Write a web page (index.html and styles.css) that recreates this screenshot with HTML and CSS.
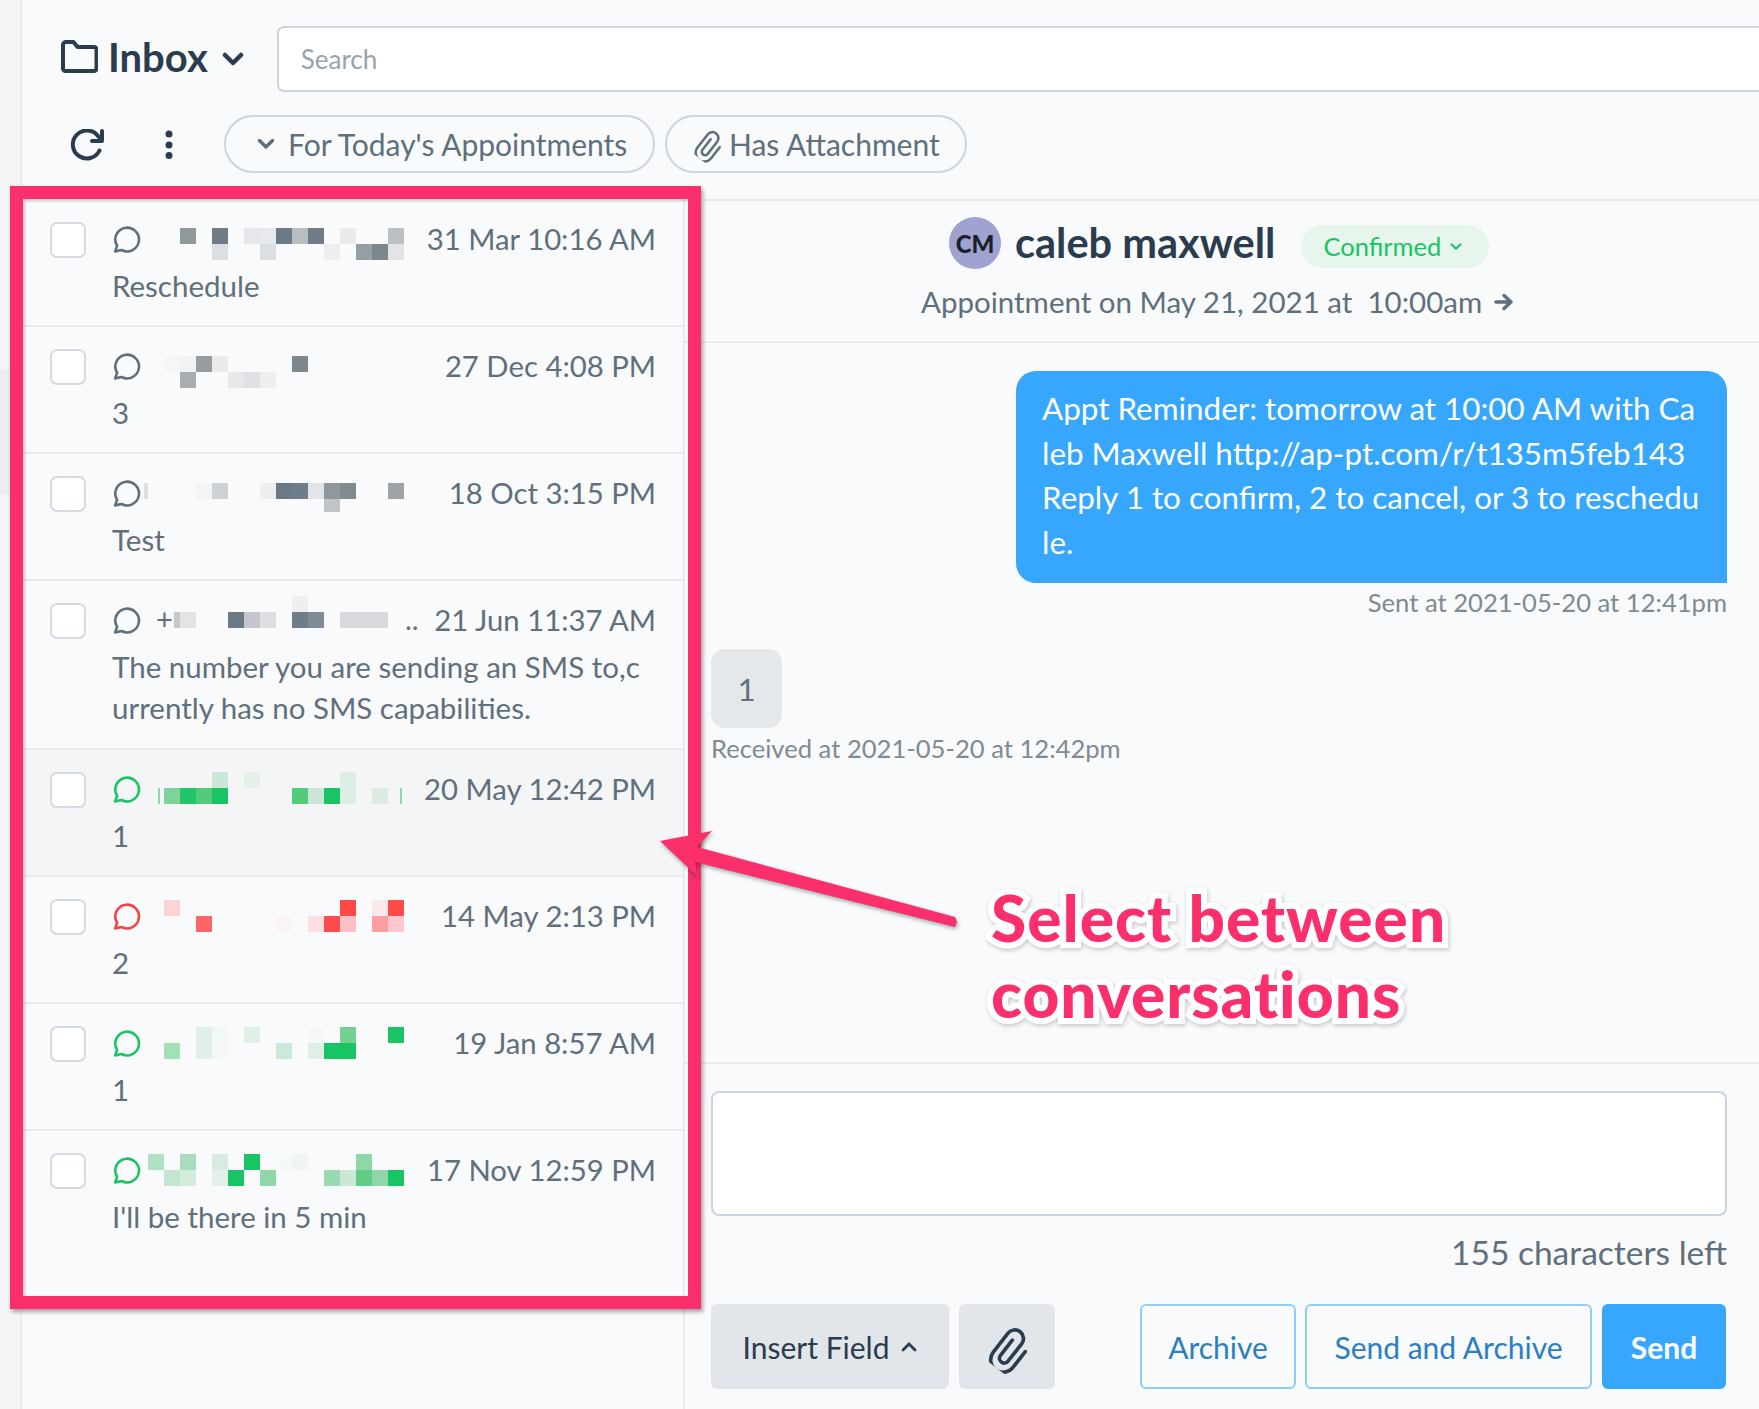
FILE: index.html
```html
<!DOCTYPE html>
<html lang="en">
<head>
  <meta charset="UTF-8" />
  <title>Inbox</title>
  <link rel="stylesheet" href="styles.css">
</head>
<body>
<div class="app">
  <div class="rail"><div class="rail-tab"></div></div>
  <div class="main">

    <div class="topbar">
      <svg class="folder" viewBox="0 0 37 33"><path d="M5 2h7.500l4 5H33a2.500 2.500 0 0 1 2.500 2.500v19A2.500 2.500 0 0 1 33 31H4.500A2.500 2.500 0 0 1 2 28.500V5a3 3 0 0 1 3-3z"/></svg>
      <span class="title">Inbox</span>
      <svg class="title-chevron" viewBox="0 0 22 14"><path d="M3 3l8 8 8-8"/></svg>
      <input class="search" type="text" placeholder="Search">
    </div>

    <div class="toolbar">
      <svg class="refresh" viewBox="0 0 36 32"><path d="M30.500 21.500A14 14 0 1 1 29 7l3.500 4"/><path d="M33 2v10H23"/></svg>
      <svg class="kebab" viewBox="0 0 8 30"><circle cx="4" cy="4" r="3.500"/><circle cx="4" cy="15" r="3.500"/><circle cx="4" cy="25.500" r="3.500"/></svg>
      <div class="pill pill-first">
        <svg class="pill-chevron" viewBox="0 0 18 12"><path d="M2.500 2.500L9 9l6.500-6.500"/></svg>
        For Today's Appointments
      </div>
      <div class="pill pill-second">
        <svg class="clip clip-small" viewBox="0 0 24 24"><path d="M12 7.500v10a2.500 2.500 0 0 0 5 0V6a4.500 4.500 0 0 0-9 0v12.500a6.500 6.500 0 0 0 13 0V8"/></svg>
        Has Attachment
      </div>
    </div>

    <div class="workspace">
      <div class="list">

        <div class="row">
          <div class="check"></div>
          <div class="row-body">
            <div class="row-head">
              <svg class="chat" viewBox="0 0 26 26"><path d="M2 24.500l1.800-5.200A11 11 0 1 1 8 23.200z"/></svg>
              <svg class="mosaic" viewBox="148 223 272 32">
                <rect x="180" y="228" width="16" height="16" fill="#8f999c"/>
                <rect x="212" y="228" width="16" height="16" fill="#6f7c85"/>
                <rect x="244" y="228" width="16" height="16" fill="#e5e7ea"/>
                <rect x="260" y="228" width="16" height="16" fill="#e8e9ec"/>
                <rect x="276" y="228" width="16" height="16" fill="#6c7a87"/>
                <rect x="292" y="228" width="16" height="16" fill="#b9bdc0"/>
                <rect x="308" y="228" width="16" height="16" fill="#6f7c87"/>
                <rect x="340" y="228" width="16" height="16" fill="#e8eaec"/>
                <rect x="388" y="228" width="16" height="16" fill="#bcc0c3"/>
                <rect x="212" y="244" width="16" height="16" fill="#dcdfe2"/>
                <rect x="260" y="244" width="16" height="16" fill="#dcdfe1"/>
                <rect x="324" y="244" width="16" height="16" fill="#eceef0"/>
                <rect x="356" y="244" width="16" height="16" fill="#969fa3"/>
                <rect x="372" y="244" width="16" height="16" fill="#7b8890"/>
                <rect x="388" y="244" width="16" height="16" fill="#e2e4e6"/>
              </svg>
              <span class="date">31 Mar 10:16 AM</span>
            </div>
            <div class="message">Reschedule</div>
          </div>
        </div>

        <div class="row">
          <div class="check"></div>
          <div class="row-body">
            <div class="row-head">
              <svg class="chat" viewBox="0 0 26 26"><path d="M2 24.500l1.800-5.200A11 11 0 1 1 8 23.200z"/></svg>
              <svg class="mosaic" viewBox="148 350 272 32">
                <rect x="164" y="356" width="16" height="16" fill="#f5f6f8"/>
                <rect x="180" y="356" width="16" height="16" fill="#f0f2f4"/>
                <rect x="196" y="356" width="16" height="16" fill="#969ca0"/>
                <rect x="212" y="356" width="16" height="16" fill="#e8eaec"/>
                <rect x="292" y="356" width="16" height="16" fill="#7e888c"/>
                <rect x="180" y="372" width="16" height="16" fill="#a8adb2"/>
                <rect x="228" y="372" width="16" height="16" fill="#e6e8ea"/>
                <rect x="244" y="372" width="16" height="16" fill="#dfe1e4"/>
                <rect x="260" y="372" width="16" height="16" fill="#eceef0"/>
              </svg>
              <span class="date">27 Dec 4:08 PM</span>
            </div>
            <div class="message">3</div>
          </div>
        </div>

        <div class="row">
          <div class="check"></div>
          <div class="row-body">
            <div class="row-head">
              <svg class="chat" viewBox="0 0 26 26"><path d="M2 24.500l1.800-5.200A11 11 0 1 1 8 23.200z"/></svg>
              <svg class="mosaic" viewBox="148 478 272 32">
                <rect x="144" y="484" width="4" height="16" fill="#dddfe1"/>
                <rect x="196" y="484" width="16" height="16" fill="#f3f4f6"/>
                <rect x="212" y="484" width="16" height="16" fill="#cfd2d4"/>
                <rect x="260" y="484" width="16" height="16" fill="#eceef0"/>
                <rect x="276" y="484" width="16" height="16" fill="#6b7985"/>
                <rect x="292" y="484" width="16" height="16" fill="#6f7d8a"/>
                <rect x="308" y="484" width="16" height="16" fill="#e2e4e7"/>
                <rect x="324" y="484" width="16" height="16" fill="#8f989f"/>
                <rect x="340" y="484" width="16" height="16" fill="#7e8b8f"/>
                <rect x="388" y="484" width="16" height="16" fill="#9ea3a6"/>
                <rect x="324" y="500" width="16" height="13" fill="#bfc4c8"/>
              </svg>
              <span class="date">18 Oct 3:15 PM</span>
            </div>
            <div class="message">Test</div>
          </div>
        </div>

        <div class="row">
          <div class="check"></div>
          <div class="row-body">
            <div class="row-head">
              <svg class="chat" viewBox="0 0 26 26"><path d="M2 24.500l1.800-5.200A11 11 0 1 1 8 23.200z"/></svg>
              <svg class="mosaic" viewBox="148 604 272 32">
                <text class="mosaic-text" x="156" y="630">+</text>
                <rect x="174" y="612" width="6" height="16" fill="#c5c9cc"/>
                <rect x="180" y="612" width="16" height="16" fill="#e2e4e6"/>
                <rect x="228" y="612" width="16" height="16" fill="#6b7985"/>
                <rect x="244" y="612" width="16" height="16" fill="#c3c7cb"/>
                <rect x="260" y="612" width="16" height="16" fill="#dcdee1"/>
                <rect x="292" y="612" width="16" height="16" fill="#6f7d8a"/>
                <rect x="308" y="612" width="16" height="16" fill="#7f8c97"/>
                <rect x="340" y="612" width="48" height="16" fill="#d8dadd"/>
                <rect x="292" y="596" width="16" height="16" fill="#eeeff1"/>
                <text class="mosaic-text" x="405" y="630">..</text>
              </svg>
              <span class="date">21 Jun 11:37 AM</span>
            </div>
            <div class="message">The number you are sending an SMS to,c<br>urrently has no SMS capabilities.</div>
          </div>
        </div>

        <div class="row row-active">
          <div class="check"></div>
          <div class="row-body">
            <div class="row-head">
              <svg class="chat chat-green" viewBox="0 0 26 26"><path d="M2 24.500l1.800-5.200A11 11 0 1 1 8 23.200z"/></svg>
              <svg class="mosaic" viewBox="148 773 272 32">
                <rect x="158" y="788" width="2" height="16" fill="#8fd6a9"/>
                <rect x="164" y="788" width="16" height="16" fill="#7fd39a"/>
                <rect x="180" y="788" width="16" height="16" fill="#22c567"/>
                <rect x="196" y="788" width="16" height="16" fill="#52cb7c"/>
                <rect x="212" y="788" width="16" height="16" fill="#18c463"/>
                <rect x="212" y="772" width="16" height="16" fill="#c9e8d5"/>
                <rect x="244" y="772" width="16" height="16" fill="#e3f1e8"/>
                <rect x="292" y="788" width="16" height="16" fill="#52cb7c"/>
                <rect x="308" y="788" width="16" height="16" fill="#cbe6d6"/>
                <rect x="324" y="788" width="16" height="16" fill="#18c463"/>
                <rect x="340" y="788" width="16" height="16" fill="#ddefe4"/>
                <rect x="340" y="772" width="16" height="16" fill="#ddefe4"/>
                <rect x="372" y="788" width="16" height="16" fill="#dcece3"/>
                <rect x="400" y="788" width="2" height="16" fill="#8fd6a9"/>
              </svg>
              <span class="date">20 May 12:42 PM</span>
            </div>
            <div class="message">1</div>
          </div>
        </div>

        <div class="row">
          <div class="check"></div>
          <div class="row-body">
            <div class="row-head">
              <svg class="chat chat-red" viewBox="0 0 26 26"><path d="M2 24.500l1.800-5.200A11 11 0 1 1 8 23.200z"/></svg>
              <svg class="mosaic" viewBox="148 900 272 32">
                <rect x="164" y="900" width="16" height="16" fill="#fdd5d7"/>
                <rect x="340" y="900" width="16" height="16" fill="#ff4848"/>
                <rect x="372" y="900" width="16" height="16" fill="#fbe8ea"/>
                <rect x="388" y="900" width="16" height="16" fill="#ff4a4a"/>
                <rect x="196" y="916" width="16" height="16" fill="#ff6467"/>
                <rect x="276" y="916" width="16" height="16" fill="#fbf3f4"/>
                <rect x="308" y="916" width="16" height="16" fill="#fbdfe1"/>
                <rect x="324" y="916" width="16" height="16" fill="#ff4a4e"/>
                <rect x="340" y="916" width="16" height="16" fill="#fdc0c4"/>
                <rect x="372" y="916" width="16" height="16" fill="#ff9da3"/>
                <rect x="388" y="916" width="16" height="16" fill="#fdc8cd"/>
              </svg>
              <span class="date">14 May 2:13 PM</span>
            </div>
            <div class="message">2</div>
          </div>
        </div>

        <div class="row">
          <div class="check"></div>
          <div class="row-body">
            <div class="row-head">
              <svg class="chat chat-green" viewBox="0 0 26 26"><path d="M2 24.500l1.800-5.200A11 11 0 1 1 8 23.200z"/></svg>
              <svg class="mosaic" viewBox="148 1028 272 32">
                <rect x="196" y="1028" width="16" height="16" fill="#e0efe7"/>
                <rect x="212" y="1028" width="16" height="16" fill="#f3f7f5"/>
                <rect x="244" y="1028" width="16" height="16" fill="#dff0e7"/>
                <rect x="308" y="1028" width="16" height="16" fill="#f5f8f7"/>
                <rect x="340" y="1028" width="16" height="16" fill="#73d193"/>
                <rect x="388" y="1028" width="16" height="16" fill="#18c463"/>
                <rect x="164" y="1044" width="16" height="16" fill="#a3dfb7"/>
                <rect x="196" y="1044" width="16" height="16" fill="#e0efe7"/>
                <rect x="212" y="1044" width="16" height="16" fill="#f3f7f5"/>
                <rect x="276" y="1044" width="16" height="16" fill="#cbe9d7"/>
                <rect x="308" y="1044" width="16" height="16" fill="#e0efe4"/>
                <rect x="324" y="1044" width="16" height="16" fill="#18c463"/>
                <rect x="340" y="1044" width="16" height="16" fill="#18c463"/>
              </svg>
              <span class="date">19 Jan 8:57 AM</span>
            </div>
            <div class="message">1</div>
          </div>
        </div>

        <div class="row row-last">
          <div class="check"></div>
          <div class="row-body">
            <div class="row-head">
              <svg class="chat chat-green" viewBox="0 0 26 26"><path d="M2 24.500l1.800-5.200A11 11 0 1 1 8 23.200z"/></svg>
              <svg class="mosaic" viewBox="148 1156 272 32">
                <rect x="148" y="1156" width="16" height="16" fill="#b0e2c2"/>
                <rect x="180" y="1156" width="16" height="16" fill="#a9dcba"/>
                <rect x="212" y="1156" width="16" height="16" fill="#d6ecdf"/>
                <rect x="244" y="1156" width="16" height="16" fill="#18c463"/>
                <rect x="276" y="1156" width="16" height="16" fill="#f5f9f7"/>
                <rect x="292" y="1156" width="16" height="16" fill="#eff6f2"/>
                <rect x="356" y="1156" width="16" height="16" fill="#8fd6a9"/>
                <rect x="164" y="1172" width="16" height="16" fill="#c2e6cf"/>
                <rect x="180" y="1172" width="16" height="16" fill="#d3ecde"/>
                <rect x="212" y="1172" width="16" height="16" fill="#e3f1e9"/>
                <rect x="228" y="1172" width="16" height="16" fill="#18c463"/>
                <rect x="260" y="1172" width="16" height="16" fill="#8fd6a9"/>
                <rect x="324" y="1172" width="16" height="16" fill="#9bd9b1"/>
                <rect x="340" y="1172" width="16" height="16" fill="#cbe8d5"/>
                <rect x="356" y="1172" width="16" height="16" fill="#62cd87"/>
                <rect x="372" y="1172" width="16" height="16" fill="#8fd6a9"/>
                <rect x="388" y="1172" width="16" height="16" fill="#18c463"/>
              </svg>
              <span class="date">17 Nov 12:59 PM</span>
            </div>
            <div class="message">I'll be there in 5 min</div>
          </div>
        </div>

      </div>

      <div class="thread">
        <div class="contact">
          <div class="contact-name">
            <div class="avatar">CM</div>
            <span class="name">caleb maxwell</span>
            <div class="badge">Confirmed <svg class="badge-chevron" viewBox="0 0 12 8"><path d="M1.500 1.500L6 6l4.500-4.500"/></svg></div>
          </div>
          <div class="appointment">Appointment on May 21, 2021 at&nbsp; 10:00am
            <svg class="arrow-right" viewBox="0 0 20 18"><path d="M2 9h15M10 2.500L17 9l-7 6.500"/></svg>
          </div>
        </div>

        <div class="messages">
          <div class="bubble bubble-out">Appt Reminder: tomorrow at 10:00 AM with Ca<br>leb Maxwell http://ap-pt.com/r/t135m5feb143<br>Reply 1 to confirm, 2 to cancel, or 3 to reschedu<br>le.</div>
          <div class="meta meta-out">Sent at 2021-05-20 at 12:41pm</div>
          <div class="bubble bubble-in">1</div>
          <div class="meta">Received at 2021-05-20 at 12:42pm</div>
        </div>

        <div class="composer">
          <textarea class="reply"></textarea>
          <div class="counter">155 characters left</div>
          <div class="actions">
            <button class="btn btn-grey btn-insert">Insert Field <svg class="insert-chevron" viewBox="0 0 16 10"><path d="M2 8l6-6 6 6"/></svg></button>
            <button class="btn btn-grey btn-attach"><svg class="clip clip-big" viewBox="0 0 24 24"><path d="M12 7.500v10a2.500 2.500 0 0 0 5 0V6a4.500 4.500 0 0 0-9 0v12.500a6.500 6.500 0 0 0 13 0V8"/></svg></button>
            <button class="btn btn-line btn-archive">Archive</button>
            <button class="btn btn-line btn-both">Send and Archive</button>
            <button class="btn btn-send">Send</button>
          </div>
        </div>
      </div>
    </div>
  </div>
</div>

<!-- annotation drawn on top of the app -->
<div class="frame"></div>
<svg class="pointer" viewBox="0 0 320 125"><path d="M10 31L62 21 47 37 305 107 307 112 305 117 45 52 48 67z"/></svg>
<div class="callout">Select between<br>conversations</div>

</body>
</html>
```

FILE: styles.css
```css
html, body {
  margin: 0;
  padding: 0;
  height: 100%;
  overflow: hidden;
}
body {
  background: #f8fafc;
  color: #606f7b;
  font-family: Lato, "Noto Sans", sans-serif;
  position: relative;
}
svg {
  display: block;
  flex: none;
}
.app {
  display: flex;
  height: 1409px;
}
.rail {
  width: 21px;
  flex: none;
  background: #f2f4f6;
  border-right: 1px solid #e4e7ea;
  padding-top: 370px;
}
.rail-tab {
  width: 9px;
  height: 125px;
  background: #ebedf0;
}
.main {
  flex: 1;
  min-width: 0;
  display: flex;
  flex-direction: column;
}

/* top bar */
.topbar {
  height: 91px;
  box-sizing: border-box;
  padding: 26px 0 0 38px;
  display: flex;
  align-items: flex-start;
}
.folder {
  width: 37px;
  height: 33px;
  margin: 14px 10px 0 1px;
  fill: none;
  stroke: #2a3c4e;
  stroke-width: 4;
  stroke-linejoin: round;
}
.title {
  font-size: 40px;
  font-weight: 700;
  line-height: 62px;
  color: #2a3c4e;
}
.title-chevron {
  width: 22px;
  height: 14px;
  margin: 26px 33px 0 14px;
  fill: none;
  stroke: #2a3c4e;
  stroke-width: 4.500;
  stroke-linecap: round;
  stroke-linejoin: round;
}
.search {
  flex: 1;
  height: 66px;
  box-sizing: border-box;
  margin-right: -20px;
  padding: 0 22px;
  background: #fff;
  border: 2px solid #cbd5e0;
  border-radius: 7px;
  font-family: inherit;
  font-size: 26px;
  outline: none;
}
.search::placeholder {
  color: #98a3ad;
}

/* filter row */
.toolbar {
  height: 108px;
  box-sizing: border-box;
  padding: 24px 0 0 47px;
  display: flex;
  align-items: flex-start;
}
.refresh {
  width: 36px;
  height: 32px;
  margin: 14px 0 0 0;
  fill: none;
  stroke: #2a3c4e;
  stroke-width: 4;
  stroke-linecap: round;
  stroke-linejoin: round;
}
.kebab {
  width: 8px;
  height: 30px;
  margin: 15px 51px 0 60px;
  fill: #2a3c4e;
}
.pill {
  height: 58px;
  box-sizing: border-box;
  display: flex;
  align-items: center;
  border: 2px solid #cbd5e0;
  border-radius: 29px;
  font-size: 30px;
  white-space: nowrap;
}
.pill-first {
  width: 431px;
  padding-left: 31px;
  margin-right: 10px;
}
.pill-second {
  width: 302px;
  padding-left: 24px;
}
.pill-chevron {
  width: 18px;
  height: 12px;
  margin-right: 13px;
  fill: none;
  stroke: #606f7b;
  stroke-width: 3.500;
  stroke-linecap: round;
  stroke-linejoin: round;
}
.clip {
  fill: none;
  stroke-width: 1.900;
  stroke-linecap: round;
  transform: rotate(38deg);
}
.clip-small {
  width: 32px;
  height: 32px;
  margin-right: 6px;
  stroke: #606f7b;
}
.clip-big {
  width: 46px;
  height: 46px;
  stroke: #2a3c4e;
}

/* conversation list */
.workspace {
  flex: 1;
  min-height: 0;
  display: flex;
}
.list {
  width: 663px;
  flex: none;
  box-sizing: border-box;
  padding-top: 1px;
  border-right: 2px solid #e8ebee;
}
.row {
  display: flex;
  padding: 22px 0 0 28px;
  height: 127px;
  box-sizing: border-box;
  border-bottom: 2px solid #e8ebee;
}
.row:nth-child(4) {
  height: 169px;
}
.row-last {
  border-bottom: none;
}
.row-active {
  background: #f3f5f6;
}
.check {
  width: 36px;
  height: 36px;
  box-sizing: border-box;
  flex: none;
  margin-right: 27px;
  background: #fff;
  border: 2px solid #d5dae3;
  border-radius: 7px;
}
.row-body {
  flex: 1;
  min-width: 0;
  margin: -3px 27px 0 0;
}
.row-head {
  height: 40px;
  display: flex;
  align-items: center;
}
.chat {
  width: 28px;
  height: 28px;
  fill: none;
  stroke: #606f7b;
  stroke-width: 2.400;
  stroke-linejoin: round;
}
.chat-green {
  stroke: #18c463;
}
.chat-red {
  stroke: #f04444;
}
.mosaic {
  width: 272px;
  height: 32px;
  margin-left: 7px;
  overflow: visible;
}
.mosaic-text {
  font-size: 29px;
  fill: #606f7b;
}
.date {
  margin: 0 0 2px auto;
  font-size: 29.300px;
  white-space: nowrap;
}
.message {
  margin: 6px 0 0 -1px;
  font-size: 29.500px;
  line-height: 41px;
  white-space: nowrap;
}

/* thread */
.thread {
  flex: 1;
  min-width: 0;
  display: flex;
  flex-direction: column;
  border-top: 2px solid #e8ebee;
}
.contact {
  height: 142px;
  box-sizing: border-box;
  border-bottom: 2px solid #e8ebee;
  padding-top: 16px;
}
.contact-name {
  display: flex;
  align-items: center;
  padding-left: 264px;
}
.avatar {
  width: 52px;
  height: 52px;
  border-radius: 50%;
  background: #a0a3cf;
  color: #1a202c;
  font-size: 24px;
  font-weight: 900;
  display: flex;
  align-items: center;
  justify-content: center;
  flex: none;
}
.name {
  margin: 0 26px 2px 14px;
  font-size: 41.500px;
  font-weight: 700;
  color: #2a3c4e;
  white-space: nowrap;
}
.badge {
  height: 43px;
  width: 188px;
  box-sizing: border-box;
  margin-top: 6px;
  padding-left: 22px;
  display: flex;
  align-items: center;
  gap: 8px;
  background: #e6f6ec;
  border-radius: 22px;
  color: #18c463;
  font-size: 25.500px;
}
.badge-chevron {
  width: 14px;
  height: 9px;
  fill: none;
  stroke: #18c463;
  stroke-width: 1.800;
}
.appointment {
  margin-top: 13px;
  padding-left: 236px;
  display: flex;
  align-items: center;
  gap: 12px;
  font-size: 29.500px;
  line-height: 40px;
}
.arrow-right {
  width: 20px;
  height: 18px;
  fill: none;
  stroke: #606f7b;
  stroke-width: 3.500;
  stroke-linecap: round;
  stroke-linejoin: round;
}
.messages {
  height: 719px;
  box-sizing: border-box;
  padding: 28px 32px 0 26px;
  display: flex;
  flex-direction: column;
}
.bubble {
  font-size: 31.400px;
  box-sizing: border-box;
}
.bubble-out {
  align-self: flex-end;
  width: 711px;
  height: 212px;
  padding: 15px 0 0 26px;
  background: #36a7fc;
  color: #fff;
  line-height: 44.500px;
  border-radius: 20px 20px 0 20px;
  white-space: nowrap;
}
.meta {
  font-size: 25.600px;
  line-height: 40px;
  color: #7f8a93;
}
.meta-out {
  align-self: flex-end;
  margin: -1px 0 27px;
}
.bubble-in {
  width: 71px;
  height: 79px;
  background: #e5e8eb;
  border-radius: 14px;
  display: flex;
  align-items: center;
  justify-content: center;
}
.composer {
  flex: 1;
  border-top: 2px solid #e8ebee;
  padding: 27px 32px 0 26px;
  display: flex;
  flex-direction: column;
}
.reply {
  height: 125px;
  box-sizing: border-box;
  background: #fff;
  border: 2px solid #cbd5e0;
  border-radius: 8px;
  resize: none;
  outline: none;
  flex: none;
}
.counter {
  text-align: right;
  font-size: 33.500px;
  line-height: 40px;
  margin: 16px 0 1px;
}
.actions {
  display: flex;
  margin-top: 31px;
  gap: 10px;
}
.btn {
  height: 85px;
  box-sizing: border-box;
  font-family: inherit;
  font-size: 30px;
  border-radius: 6px;
  display: flex;
  align-items: center;
  justify-content: center;
  padding: 0;
  background: none;
  border: none;
}
.btn-grey {
  background: #e2e5e9;
  color: #2a3c4e;
}
.btn-insert {
  width: 238px;
  gap: 12px;
}
.insert-chevron {
  width: 16px;
  height: 10px;
  fill: none;
  stroke: #2a3c4e;
  stroke-width: 2.800;
  stroke-linecap: round;
}
.btn-attach {
  width: 96px;
  margin-right: 75px;
}
.btn-line {
  border: 2px solid #90cdf4;
  color: #2b7fc0;
}
.btn-archive {
  width: 156px;
  margin-right: -1px;
}
.btn-both {
  width: 287px;
}
.btn-send {
  width: 124px;
  background: #36a7fc;
  color: #fff;
  font-weight: 700;
}

/* annotation */
.frame {
  position: absolute;
  left: 10px;
  top: 186px;
  width: 691px;
  height: 1123px;
  box-sizing: border-box;
  border: 13px solid #fb2f6b;
  box-shadow: 2px 3px 4px rgba(0, 0, 0, .35), inset 2px 2px 3px rgba(0, 0, 0, .2);
}
.pointer {
  position: absolute;
  left: 650px;
  top: 810px;
  width: 320px;
  height: 125px;
  overflow: visible;
  fill: #fb2f6b;
  filter: drop-shadow(1px 2px 2px rgba(0, 0, 0, .35));
}
.callout {
  position: absolute;
  left: 991px;
  top: 880px;
  font-size: 64px;
  font-weight: 900;
  letter-spacing: 1px;
  line-height: 76px;
  color: #fb2f6b;
  white-space: nowrap;
  -webkit-text-stroke: 12px #fff;
  paint-order: stroke fill;
  filter: drop-shadow(1px 2px 2px rgba(0, 0, 0, .2));
}
```
